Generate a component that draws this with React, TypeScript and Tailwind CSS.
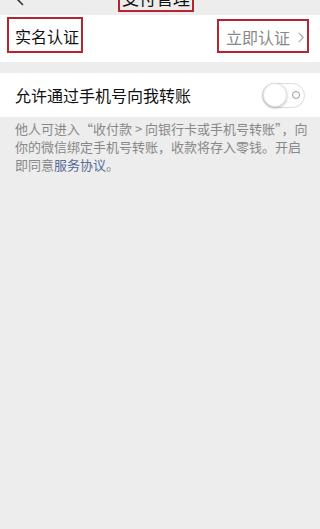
import React from "react";

export default function App() {
  return (
    <div
      className="w-[320px] h-[529px] bg-[#ededed] overflow-hidden"
      style={{ fontFamily: '"Noto Sans CJK SC", "Noto Sans", sans-serif' }}
    >
      {/* top bar (cut off) */}
      <div className="h-[15px] overflow-hidden flex items-end">
        <svg className="ml-[16px] mb-[9px] w-[8px] h-[14px] shrink-0" viewBox="0 0 8 14">
          <path d="M7 1 L1 7 L7 13" fill="none" stroke="#333" strokeWidth="1.6" />
        </svg>
        <div className="ml-[94px] mb-[3px] w-[76px] h-[34px] border-2 border-[#b7232f] flex items-end justify-center pb-[2px] shrink-0">
          <span className="text-[17px] leading-[20px] text-[#111] whitespace-nowrap">支付管理</span>
        </div>
      </div>

      {/* 实名认证 row */}
      <div className="bg-white h-[47px] flex items-start justify-between pl-[7px] pr-[11px] pt-[2px]">
        <div className="w-[76px] h-[36px] border-2 border-[#b7232f] flex items-end pl-[6px] pb-[5px]">
          <span className="text-[16px] leading-[20px] text-[#111] whitespace-nowrap">实名认证</span>
        </div>
        <div className="mt-[2px] w-[92px] h-[34px] border-2 border-[#b7232f] flex items-end pl-[7px] pb-[4px]">
          <span className="text-[16px] leading-[20px] text-[#888] whitespace-nowrap">立即认证</span>
          <svg className="ml-[8px] mb-[4px] w-[6px] h-[11px]" viewBox="0 0 6 11">
            <path d="M0.8 0.8 L5.2 5.5 L0.8 10.2" fill="none" stroke="#aaa" strokeWidth="1.2" />
          </svg>
        </div>
      </div>

      {/* gap */}
      <div className="h-[11px]" />

      {/* toggle row */}
      <div className="bg-white h-[44px] flex items-center justify-between pl-[15px] pr-[15px]">
        <span className="text-[16px] leading-[20px] text-[#111] whitespace-nowrap">允许通过手机号向我转账</span>
        <div className="relative w-[43px] h-[25px] rounded-full border border-[#dcdcdc] bg-white flex items-center">
          <div className="w-[24px] h-[24px] rounded-full bg-white border border-[#e2e2e2] shadow-[0_1px_3px_rgba(0,0,0,0.25)]" />
          <div className="ml-[5px] w-[8px] h-[8px] rounded-full border border-[#9a9a9a]" />
        </div>
      </div>

      {/* description */}
      <div className="pl-[15px] pr-[12px] pt-[3px] text-[13px] leading-[18px] text-[#888] whitespace-nowrap">
        他人可进入“收付款 &gt; 向银行卡或手机号转账”，向
        <br />
        你的微信绑定手机号转账，收款将存入零钱。开启
        <br />
        即同意<span className="text-[#576b95]">服务协议</span>。
      </div>
    </div>
  );
}
